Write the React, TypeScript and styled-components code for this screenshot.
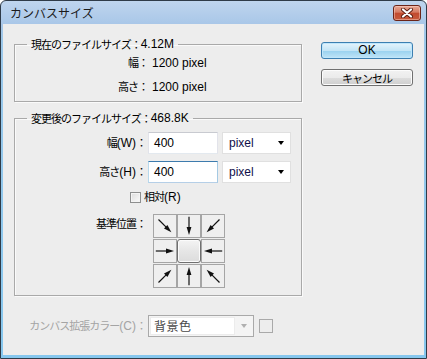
import styled, { createGlobalStyle } from 'styled-components';

const GlobalStyle = createGlobalStyle`
  html, body { margin: 0; padding: 0; background: #fff; }
  body {
    font-family: "Liberation Sans", "Noto Sans CJK JP", sans-serif;
    font-size: 12px;
    line-height: 16px;
    color: #000;
  }
  * { box-sizing: border-box; }
`;

const Jp = styled.span`
  font-family: "Noto Sans CJK JP", sans-serif;
  font-size: 11px;
  line-height: 14px;
  letter-spacing: -1px;
`;

const Window = styled.div`
  width: 427px;
  height: 359px;
  border: 1px solid #2f3b48;
  border-radius: 6px 6px 0 0;
  background: linear-gradient(#bfd5ee, #a9c7e8 23px, #9cc8ea 40px, #86c7ee);
  padding: 0 2px 3px 2px;
  display: flex;
  flex-direction: column;
`;

const TitleBar = styled.div`
  height: 23px;
  display: flex;
  align-items: center;
  justify-content: space-between;
  padding: 0 3px 0 7px;
`;

const Title = styled.div`
  font-family: "Noto Sans CJK JP", sans-serif;
  font-size: 12px;
  color: #1b1b1b;
`;

const CloseButton = styled.div`
  width: 28px;
  height: 16px;
  border: 1px solid #6b2418;
  border-radius: 3px;
  background: linear-gradient(#e7a895, #d57a62 45%, #c24a2f 50%, #c75a3c);
  box-shadow: inset 0 0 0 1px rgba(255, 220, 210, 0.45);
  display: grid;
  place-content: center;
`;

const Content = styled.div`
  flex: 1;
  background: #ededed;
  padding: 12px 10px 0 11px;
  display: flex;
  flex-direction: column;
`;

const Main = styled.div`
  display: flex;
  gap: 19px;
`;

const LeftCol = styled.div`
  width: 288px;
  display: flex;
  flex-direction: column;
  gap: 8px;
`;

const Group = styled.fieldset<{ $pb: number }>`
  margin: 0;
  padding: 0 0 ${({ $pb }) => $pb}px 0;
  border: 1px solid #a9a9a9;
  box-shadow: inset 1px 1px 0 #fafafa, 1px 1px 0 #fafafa;
  min-width: 0;
`;

const Legend = styled.legend`
  margin-left: 12px;
  padding: 0 4px;
  height: 16px;
  display: flex;
  align-items: center;
`;

const InfoGrid = styled.div`
  display: grid;
  grid-template-columns: 133px auto;
  column-gap: 4px;
  grid-auto-rows: 24px;
  align-items: center;
  margin-top: -1px;
`;

const RightLabel = styled.div`
  text-align: right;
  white-space: nowrap;
`;

const FormGrid = styled.div`
  display: grid;
  grid-template-columns: 131px 70px 71px;
  column-gap: 2px;
  row-gap: 7px;
  padding-top: 6px;
  align-items: center;
  & > :nth-child(3n) { margin-left: 2px; }
`;

const TextBox = styled.div<{ $focus?: boolean }>`
  height: 22px;
  border: 1px solid;
  border-color: ${({ $focus }) =>
    $focus ? '#3d7bad #a4c9e3 #b5cfe7 #b7d9ed' : '#c8cad0 #e2e3ea #e3e9ef #e2e3ea'};
  background: #fff;
  padding: 0 5px;
  display: flex;
  align-items: center;
`;

const Combo = styled.div`
  height: 22px;
  border: 1px solid #e0e0e0;
  background: #fff;
  padding: 0 6px;
  display: flex;
  align-items: center;
  justify-content: space-between;
  color: #10104a;
`;

const Caret = styled.span<{ $color?: string }>`
  width: 0;
  height: 0;
  border-left: 3.5px solid transparent;
  border-right: 3.5px solid transparent;
  border-top: 4px solid ${({ $color }) => $color || '#000'};
`;

const CheckRow = styled.div`
  margin: 6px 0 0 115px;
  display: flex;
  align-items: center;
  gap: 3px;
  height: 16px;
`;

const CheckBox = styled.span`
  width: 11px;
  height: 11px;
  border: 1px solid #8e8f8f;
  background: linear-gradient(135deg, #dcdcdc, #fbfbfb);
  box-shadow: inset 0 0 0 1px #f4f4f4;
`;

const AnchorRow = styled.div`
  margin-top: 9px;
  display: flex;
  align-items: flex-start;
`;

const AnchorLabel = styled.div`
  width: 131px;
  text-align: right;
  padding-top: 2px;
`;

const AnchorGrid = styled.div`
  margin-left: 7px;
  display: grid;
  grid-template-columns: repeat(3, 24px);
  grid-auto-rows: 24px;
  row-gap: 1px;
`;

const Cell = styled.div<{ $center?: boolean }>`
  border: 1px solid ${({ $center }) => ($center ? '#6f6f6f' : '#a5a5a5')};
  border-radius: ${({ $center }) => ($center ? '3px' : '0')};
  background: ${({ $center }) =>
    $center ? 'linear-gradient(#f4f4f4, #e6e6e6 50%, #dcdcdc)' : '#efefef'};
  box-shadow: ${({ $center }) => ($center ? 'inset 0 0 0 1px #fbfbfb' : 'none')};
  display: grid;
  place-content: center;
`;

const RightCol = styled.div`
  width: 92px;
  padding-top: 6px;
  display: flex;
  flex-direction: column;
  gap: 10px;
`;

const Button = styled.div<{ $primary?: boolean }>`
  height: 17px;
  border: 1px solid ${({ $primary }) => ($primary ? '#3c7fb1' : '#707070')};
  border-radius: 3px;
  background: ${({ $primary }) =>
    $primary
      ? 'linear-gradient(#e5f4fc, #c4e5f6 50%, #98d1ef 51%, #bfe4f7)'
      : 'linear-gradient(#f2f2f2, #ebebeb 50%, #dddddd 51%, #cfcfcf)'};
  box-shadow: inset 0 0 0 1px ${({ $primary }) => ($primary ? '#bfe6fb' : '#fcfcfc')};
  display: flex;
  align-items: center;
  justify-content: center;
  line-height: 15px;
`;

const BottomRow = styled.div`
  margin-top: 19px;
  display: grid;
  grid-template-columns: 132px 106px 14px;
  column-gap: 2px;
  align-items: center;
  color: #a4a4a4;
  & > :last-child { margin-left: 3px; }
`;

const DisabledCombo = styled.div`
  height: 22px;
  border: 1px solid #a9a9a9;
  background: #f4f4f4;
  display: flex;
  align-items: center;
  padding: 1px 6px 1px 1px;
  gap: 6px;
`;

const DisabledField = styled.div`
  flex: 1;
  height: 100%;
  background: #fff;
  border: 1px solid #ececec;
  padding-left: 3px;
  display: flex;
  align-items: center;
  color: #4a4a4a;
  span { font-size: 12px; letter-spacing: 0.5px; }
`;

const Swatch = styled.div`
  width: 14px;
  height: 14px;
  border: 1px solid #a9a9a9;
`;

const angles = [45, 90, 135, 0, null, 180, -45, -90, -135];

function Arrow({ angle }: { angle: number }) {
  return (
    <svg width="22" height="22" viewBox="0 0 22 22">
      <g transform={`rotate(${angle} 11 11)`}>
        <line x1="1.8" y1="11" x2="14" y2="11" stroke="#111" strokeWidth="1.2" />
        <polygon points="12,8.6 20,11 12,13.4" fill="#111" />
      </g>
    </svg>
  );
}

export default function App() {
  return (
    <>
      <GlobalStyle />
      <Window>
        <TitleBar>
          <Title>カンバスサイズ</Title>
          <CloseButton>
            <svg width="14" height="10" viewBox="0 0 14 10">
              <path d="M3 1.5 L11 8.5 M11 1.5 L3 8.5" stroke="#5a1d12" strokeWidth="4" strokeLinecap="round" />
              <path d="M3 1.5 L11 8.5 M11 1.5 L3 8.5" stroke="#fff" strokeWidth="2.2" strokeLinecap="round" />
            </svg>
          </CloseButton>
        </TitleBar>
        <Content>
          <Main>
            <LeftCol>
              <Group $pb={2}>
                <Legend><Jp>現在のファイルサイズ：</Jp>4.12M</Legend>
                <InfoGrid>
                  <RightLabel><Jp>幅：</Jp></RightLabel>
                  <div>1200 pixel</div>
                  <RightLabel><Jp>高さ：</Jp></RightLabel>
                  <div>1200 pixel</div>
                </InfoGrid>
              </Group>
              <Group $pb={7}>
                <Legend><Jp>変更後のファイルサイズ：</Jp>468.8K</Legend>
                <FormGrid>
                  <RightLabel><Jp>幅</Jp>(W)<Jp>：</Jp></RightLabel>
                  <TextBox>400</TextBox>
                  <Combo>pixel<Caret /></Combo>
                  <RightLabel><Jp>高さ</Jp>(H)<Jp>：</Jp></RightLabel>
                  <TextBox $focus>400</TextBox>
                  <Combo>pixel<Caret /></Combo>
                </FormGrid>
                <CheckRow>
                  <CheckBox />
                  <span><Jp>相対</Jp>(R)</span>
                </CheckRow>
                <AnchorRow>
                  <AnchorLabel><Jp>基準位置：</Jp></AnchorLabel>
                  <AnchorGrid>
                    {angles.map((a, i) => (
                      <Cell key={i} $center={a === null}>
                        {a !== null && <Arrow angle={a} />}
                      </Cell>
                    ))}
                  </AnchorGrid>
                </AnchorRow>
              </Group>
            </LeftCol>
            <RightCol>
              <Button $primary>OK</Button>
              <Button><Jp>キャンセル</Jp></Button>
            </RightCol>
          </Main>
          <BottomRow>
            <RightLabel><Jp>カンバス拡張カラー</Jp>(C)<Jp>：</Jp></RightLabel>
            <DisabledCombo>
              <DisabledField><Jp>背景色</Jp></DisabledField>
              <Caret $color="#b0b0b0" />
            </DisabledCombo>
            <Swatch />
          </BottomRow>
        </Content>
      </Window>
    </>
  );
}
